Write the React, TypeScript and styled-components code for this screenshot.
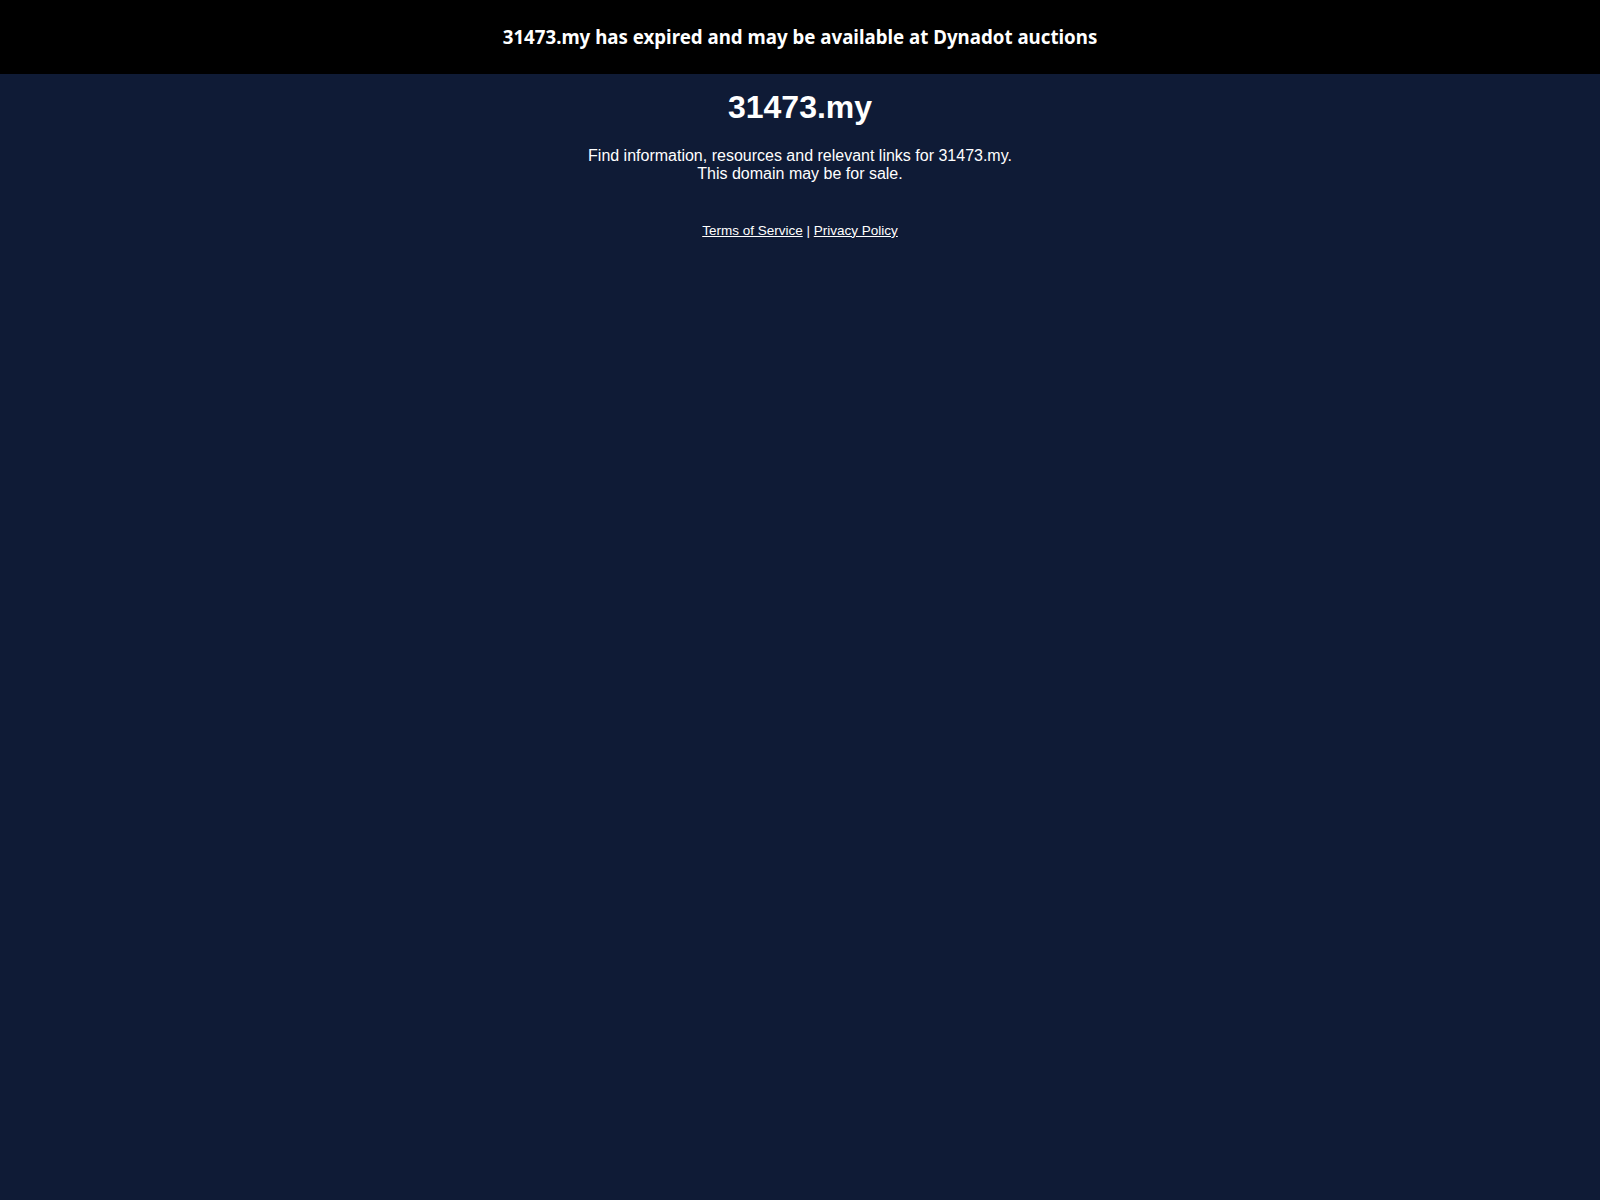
import React from "react";
import styled, { createGlobalStyle } from "styled-components";

const GlobalStyle = createGlobalStyle`
  html, body {
    margin: 0;
    padding: 0;
    background: #0f1b36;
    min-height: 100%;
  }
  body {
    font-family: "Liberation Sans", Arial, sans-serif;
    color: #ffffff;
  }
`;

const Page = styled.div`
  min-height: 1200px;
  background: #0f1b36;
  display: flex;
  flex-direction: column;
`;

const Banner = styled.div`
  height: 74px;
  box-sizing: border-box;
  padding-bottom: 2px;
  background: #000000;
  display: flex;
  align-items: center;
  justify-content: center;
  font-family: "Noto Sans", "DejaVu Sans", sans-serif;
  font-weight: 700;
  font-size: 18.7px;
  color: #ffffff;
`;

const Content = styled.main`
  display: flex;
  flex-direction: column;
  align-items: center;
  text-align: center;
  padding-top: 15px;
`;

const Title = styled.h1`
  margin: 0;
  font-size: 32px;
  line-height: 37px;
  font-weight: 700;
`;

const Description = styled.p`
  margin: 21px 0 0;
  font-size: 16px;
  line-height: 18.4px;
`;

const Footer = styled.div`
  margin-top: 39px;
  font-size: 13.5px;
  line-height: 15px;
`;

const FooterLink = styled.a`
  color: #ffffff;
  text-decoration: underline;
`;

const App: React.FC = () => {
  return (
    <>
      <GlobalStyle />
      <Page>
        <Banner>31473.my has expired and may be available at Dynadot auctions</Banner>
        <Content>
          <Title>31473.my</Title>
          <Description>
            Find information, resources and relevant links for 31473.my.
            <br />
            This domain may be for sale.
          </Description>
          <Footer>
            <FooterLink href="#">Terms of Service</FooterLink> |{" "}
            <FooterLink href="#">Privacy Policy</FooterLink>
          </Footer>
        </Content>
      </Page>
    </>
  );
};

export default App;
